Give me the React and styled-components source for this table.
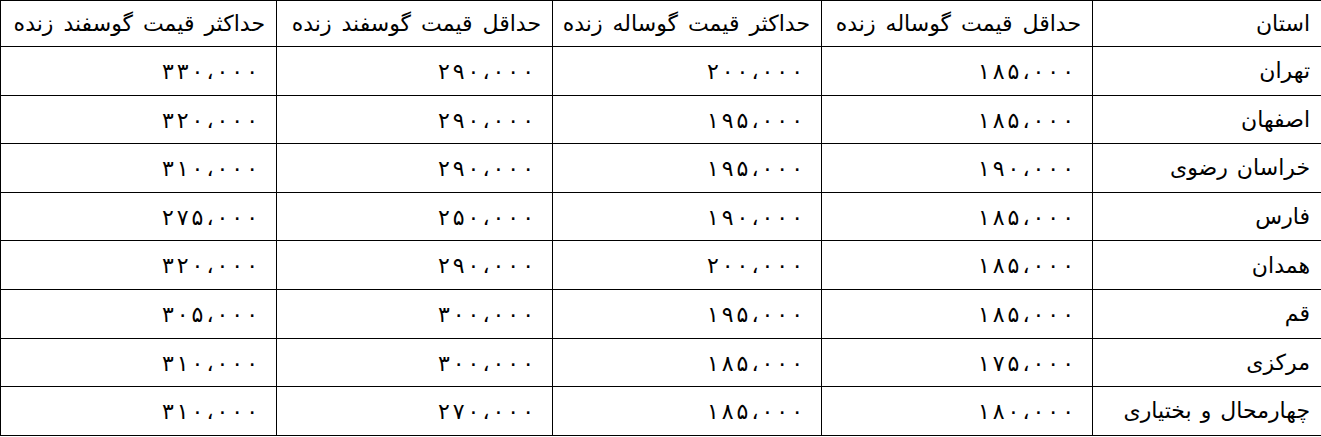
import React from 'react';
import styled, { createGlobalStyle } from 'styled-components';

const GlobalStyle = createGlobalStyle`
  html, body {
    margin: 0;
    padding: 0;
    background: #ffffff;
  }
  body {
    font-family: "DejaVu Sans", "Noto Sans", sans-serif;
    color: #000;
  }
`;

const columns = [
  { title: 'استان', width: 229 },
  { title: 'حداقل قیمت گوساله زنده', width: 271 },
  { title: 'حداکثر قیمت گوساله زنده', width: 269 },
  { title: 'حداقل قیمت گوسفند زنده', width: 276 },
  { title: 'حداکثر قیمت گوسفند زنده', width: 276 },
];

const rows = [
  ['تهران', '۱۸۵،۰۰۰', '۲۰۰،۰۰۰', '۲۹۰،۰۰۰', '۳۳۰،۰۰۰'],
  ['اصفهان', '۱۸۵،۰۰۰', '۱۹۵،۰۰۰', '۲۹۰،۰۰۰', '۳۲۰،۰۰۰'],
  ['خراسان رضوی', '۱۹۰،۰۰۰', '۱۹۵،۰۰۰', '۲۹۰،۰۰۰', '۳۱۰،۰۰۰'],
  ['فارس', '۱۸۵،۰۰۰', '۱۹۰،۰۰۰', '۲۵۰،۰۰۰', '۲۷۵،۰۰۰'],
  ['همدان', '۱۸۵،۰۰۰', '۲۰۰،۰۰۰', '۲۹۰،۰۰۰', '۳۲۰،۰۰۰'],
  ['قم', '۱۸۵،۰۰۰', '۱۹۵،۰۰۰', '۳۰۰،۰۰۰', '۳۰۵،۰۰۰'],
  ['مرکزی', '۱۷۵،۰۰۰', '۱۸۵،۰۰۰', '۳۰۰،۰۰۰', '۳۱۰،۰۰۰'],
  ['چهارمحال و بختیاری', '۱۸۰،۰۰۰', '۱۸۵،۰۰۰', '۲۷۰،۰۰۰', '۳۱۰،۰۰۰'],
];

const PriceTable = styled.table`
  direction: rtl;
  width: 1321px;
  table-layout: fixed;
  border-collapse: collapse;
  font-size: 22px;
`;

const HeadRow = styled.tr`
  height: 46px;
`;

const Row = styled.tr`
  height: 48.6px;
`;

const HeadCell = styled.th`
  border: 1px solid #000;
  padding: 0 11px;
  text-align: right;
  font-weight: normal;
  white-space: nowrap;
  word-spacing: 3px;
`;

const Cell = styled.td`
  border: 1px solid #000;
  padding: 0 ${(p) => (p.$num ? '18px' : '11px')} 0 11px;
  text-align: right;
  white-space: nowrap;
  word-spacing: 2px;
`;

const Amount = styled.span`
  display: inline-flex;
  direction: ltr;
  gap: 3px;
  vertical-align: middle;
`;

export default function App() {
  return (
    <>
      <GlobalStyle />
      <PriceTable>
        <colgroup>
          {columns.map((c) => (
            <col key={c.title} style={{ width: c.width }} />
          ))}
        </colgroup>
        <thead>
          <HeadRow>
            {columns.map((c) => (
              <HeadCell key={c.title}>{c.title}</HeadCell>
            ))}
          </HeadRow>
        </thead>
        <tbody>
          {rows.map((r) => (
            <Row key={r[0]}>
              {r.map((v, i) =>
                i === 0 ? (
                  <Cell key={i}>{v}</Cell>
                ) : (
                  <Cell key={i} $num>
                    <Amount>
                      {Array.from(v).map((ch, j) => (
                        <span key={j}>{ch}</span>
                      ))}
                    </Amount>
                  </Cell>
                )
              )}
            </Row>
          ))}
        </tbody>
      </PriceTable>
    </>
  );
}
